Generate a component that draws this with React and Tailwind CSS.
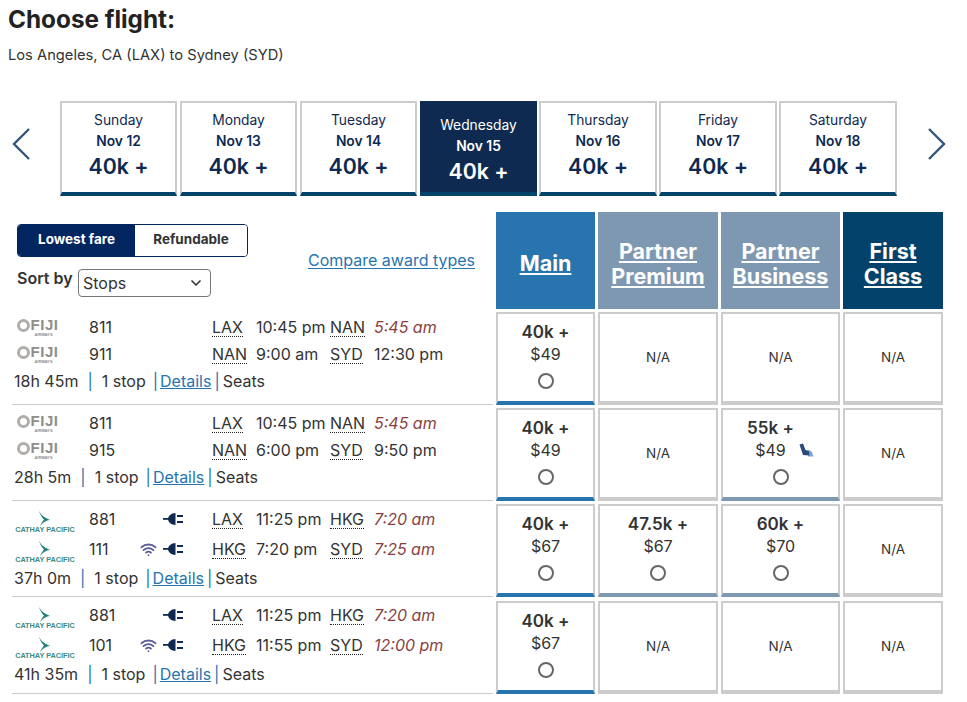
import { ChevronDown, Wifi } from 'lucide-react';

const days = [
  ['Sunday', 'Nov 12', 'w-[117px]'],
  ['Monday', 'Nov 13', 'w-[117px]'],
  ['Tuesday', 'Nov 14', 'w-[117px]'],
  ['Wednesday', 'Nov 15', 'w-[117px] -mr-[1px]', true],
  ['Thursday', 'Nov 16', 'w-[118px] -mr-[1px]'],
  ['Friday', 'Nov 17', 'w-[118px] -mr-[1px]'],
  ['Saturday', 'Nov 18', 'w-[118px]'],
];

const rows = [
  {
    logo: 'fiji',
    legs: [
      ['811', false, false, 'LAX', '10:45 pm', 'NAN', '5:45 am', true],
      ['911', false, false, 'NAN', '9:00 am', 'SYD', '12:30 pm', false],
    ],
    total: '18h 45m',
    height: 'h-[96px]',
    rowClass: 'pt-[5px]',
    cells: [['40k +', '$49', 'main'], null, null, null],
  },
  {
    logo: 'fiji',
    legs: [
      ['811', false, false, 'LAX', '10:45 pm', 'NAN', '5:45 am', true],
      ['915', false, false, 'NAN', '6:00 pm', 'SYD', '9:50 pm', false],
    ],
    total: '28h 5m',
    height: 'h-[96px]',
    rowClass: 'pt-[5px]',
    cells: [['40k +', '$49', 'main'], null, ['55k +', '$49', 'partner', true], null],
  },
  {
    logo: 'cathay',
    legs: [
      ['881', false, true, 'LAX', '11:25 pm', 'HKG', '7:20 am', true],
      ['111', true, true, 'HKG', '7:20 pm', 'SYD', '7:25 am', true],
    ],
    total: '37h 0m',
    height: 'h-[97px]',
    rowClass: 'pt-[3px]',
    cells: [['40k +', '$67', 'main'], ['47.5k +', '$67', 'partner'], ['60k +', '$70', 'partner'], null],
  },
  {
    logo: 'cathay',
    legs: [
      ['881', false, true, 'LAX', '11:25 pm', 'HKG', '7:20 am', true],
      ['101', true, true, 'HKG', '11:55 pm', 'SYD', '12:00 pm', true],
    ],
    total: '41h 35m',
    height: 'h-[96px]',
    rowClass: 'pt-[2px]',
    cells: [['40k +', '$67', 'main'], null, null, null],
  },
];

function FijiLogo() {
  return (
    <div className="ml-[5px] flex w-[41px] flex-col items-center font-['Liberation_Sans',sans-serif] text-[#85827f] opacity-90">
      <div className="flex items-center gap-[1px]">
        <span className="h-[13px] w-[13px] rounded-full border-[3px] border-[#a8a5a3]" />
        <span className="text-[15px] leading-[14px] font-bold tracking-[0.5px]">FIJI</span>
      </div>
      <span className="ml-3 text-[4px] leading-[5px] font-bold">AIRWAYS</span>
    </div>
  );
}

function CathayLogo() {
  return (
    <div className="ml-[3px] flex h-[24px] w-[60px] flex-col items-center pt-[3px]">
      <svg width="15" height="16" viewBox="0 0 15 16" className="mr-[2px] shrink-0">
        <path d="M2 0 C3 4 6 7 13 10 C9 10.500 6 12 3 16 C4 13 6 11 7 9.500 C4.500 7 2.500 4 2 0Z" fill="#1f7f77" />
      </svg>
      <span className="shrink-0 font-['Liberation_Sans',sans-serif] text-[7.300px] leading-[8px] font-bold whitespace-nowrap text-[#3c8a84]">
        CATHAY PACIFIC
      </span>
    </div>
  );
}

function PlugIcon() {
  return (
    <svg width="20" height="14" viewBox="0 0 20 14" fill="#0f2a50">
      <path d="M0 6h6V7.800H0z" />
      <path d="M12.500 1v12C8.500 13 5 10 5 7s3.500-6 7.500-6z" />
      <path d="M14 3h6v2h-6zM14 9h6v2h-6z" />
    </svg>
  );
}

function SeatIcon() {
  return (
    <svg width="15" height="14" viewBox="0 0 15 14">
      <path d="M9.500 6.500 L13 9 L14.500 13.500 L9 13.500z" fill="#7fa8d8" />
      <path d="M0.500 1.500 L4 0.500 L6.500 7 L10 8 L10.500 12.500 L4 12z" fill="#2b4a78" />
    </svg>
  );
}

function Code({ children }) {
  return <span className="inline-block border-b border-dotted border-[#222] leading-[17px]">{children}</span>;
}

function Leg({ leg, logo }) {
  const [num, wifi, plug, from, dep, to, arr, red] = leg;
  const height = logo === 'fiji' ? 'h-[21px]' : 'h-[24px]';
  return (
    <div className={`grid grid-cols-[77px_51px_21px_2px_49px_44px_74px_44px_1fr] items-center whitespace-nowrap ${height}`}>
      <div className="flex items-center">{logo === 'fiji' ? <FijiLogo /> : <CathayLogo />}</div>
      <span>{num}</span>
      <span className="flex items-center">{wifi && <Wifi size={17} strokeWidth={2.6} color="#5a5f96" />}</span>
      <span />
      <span className="flex items-center">{plug && <PlugIcon />}</span>
      <span><Code>{from}</Code></span>
      <span>{dep}</span>
      <span><Code>{to}</Code></span>
      <span className={red ? 'text-[#8a3f3f] italic' : ''}>{arr}</span>
    </div>
  );
}

function FareCell({ cell }) {
  if (!cell) {
    return (
      <div className="flex h-[93px] items-center justify-center border-2 border-b-[4px] border-[#cccccc] bg-white text-[13.500px] text-[#333]">
        N/A
      </div>
    );
  }
  const [points, price, kind, seat] = cell;
  const bar = kind === 'main' ? 'border-b-[#2774ae]' : 'border-b-[#7f98b2]';
  return (
    <div className={`flex h-[93px] flex-col items-center border-2 border-b-[4px] border-[#cccccc] bg-white pt-[6px] ${bar}`}>
      <span className={`text-[17px] leading-[24px] font-semibold text-[#333] ${seat ? 'mr-[20px]' : ''}`}>{points}</span>
      <span className="relative text-[16px] leading-[20px] text-[#333]">
        <span className={seat ? 'mr-[20px]' : ''}>{price}</span>
        {seat && (
          <span className="absolute top-[3px] -right-[8px]">
            <SeatIcon />
          </span>
        )}
      </span>
      <span className="mt-[9px] h-[16px] w-[16px] rounded-full border-2 border-[#666]" />
    </div>
  );
}

function HeaderCell({ bg, lines }) {
  return (
    <div className={`flex h-[97px] flex-col items-center justify-center pt-[6px] text-[21.500px] leading-[25px] font-bold text-white ${bg}`}>
      {lines.map((l) => (
        <span key={l} className="underline underline-offset-2">{l}</span>
      ))}
    </div>
  );
}

function Arrow({ right }) {
  return (
    <svg width="20" height="34" viewBox="0 0 20 34" fill="none" stroke="#33567a" strokeWidth="2.4">
      <path d={right ? 'M2 2l15 15L2 32' : 'M18 2L3 17l15 15'} />
    </svg>
  );
}

export default function App() {
  return (
    <div className="h-[702px] w-[967px] overflow-hidden bg-white font-[Inter,sans-serif] text-[#333]">
      <div className="px-2 pt-[4px]">
        <h1 className="text-[24.300px] leading-[30px] font-bold text-[#222]">Choose flight:</h1>
        <p className="mt-[11px] text-[14.700px] leading-[20px] text-[#333]">Los Angeles, CA (LAX) to Sydney (SYD)</p>
      </div>

      <div className="mt-[36px] flex h-[95px] items-center">
        <div className="mb-[10px] flex w-[60px] justify-center pr-[26px] pl-[8px]"><Arrow /></div>
        <div className="flex gap-[3px]">
          {days.map(([day, date, size, active]) => (
            <div
              key={day}
              className={
                active
                  ? `flex h-[95px] flex-col items-center border-b-[4px] border-[#03426a] bg-[#0f2a50] pt-[14px] text-white ${size}`
                  : `flex h-[95px] flex-col items-center border-2 border-b-[4px] border-[#cccccc] border-b-[#03426a] bg-white pt-[7px] text-[#0f2a50] ${size}`
              }
            >
              <span className="text-[13.800px] leading-[20px]">{day}</span>
              <span className="text-[13.800px] leading-[22px] font-semibold">{date}</span>
              <span className="text-[21.300px] leading-[28px] font-semibold">40k +</span>
            </div>
          ))}
        </div>
        <div className="mb-[10px] ml-[30px]"><Arrow right /></div>
      </div>

      <div className="mt-[16px] grid grid-cols-[481px_99px_120px_119px_100px] gap-x-[3px] pl-[12px]">
        <div className="flex h-[100px] flex-col pl-[5px]">
          <div className="mt-[12px] flex h-[33px] w-[231px] overflow-hidden rounded border border-[#01265f] text-[13.500px] font-bold">
            <span className="flex w-[117px] items-center justify-center bg-[#01265f] pb-[2px] text-white">Lowest fare</span>
            <span className="flex flex-1 items-center justify-center bg-white pb-[2px]">Refundable</span>
          </div>
          <div className="mt-[12px] flex items-start">
            <span className="-mt-[1px] w-[61px] text-[16px] leading-[20px] font-semibold whitespace-nowrap">Sort by</span>
            <div className="flex h-[28px] w-[133px] items-center justify-between rounded-sm border border-[#767676] pr-[6px] pb-[1px] pl-[4px] text-[16px]">
              Stops
              <ChevronDown size={16} strokeWidth={2.5} />
            </div>
            <a className="-mt-[21px] ml-[97px] text-[16px] whitespace-nowrap text-[#2774ae] underline underline-offset-2">Compare award types</a>
          </div>
        </div>
        <HeaderCell bg="bg-[#2774ae]" lines={['Main']} />
        <HeaderCell bg="bg-[#7f98b2]" lines={['Partner', 'Premium']} />
        <HeaderCell bg="bg-[#7f98b2]" lines={['Partner', 'Business']} />
        <HeaderCell bg="bg-[#03426a]" lines={['First', 'Class']} />

        {rows.map((r) => (
          <div key={r.total + r.legs[1][0]} className="contents">
            <div className={r.height}>
              <div className={`flex h-[93px] flex-col gap-[6px] border-b border-[#ccc] text-[16px] leading-[21px] ${r.rowClass}`}>
                {r.legs.map((leg, i) => (
                  <Leg key={i} leg={leg} logo={r.logo} />
                ))}
                <div className={`whitespace-nowrap pl-[2px] ${r.logo === 'cathay' ? 'mt-[1px]' : ''}`}>
                  {r.total}
                  <span className="mx-[9px] text-[#2774ae]">|</span>1 stop
                  <span className="mr-[2px] ml-[7px] text-[#2774ae]">|</span>
                  <a className="text-[#2774ae] underline">Details</a>
                  <span className="mx-[3px] text-[#2774ae]">|</span>Seats
                </div>
              </div>
            </div>
            {r.cells.map((c, i) => (
              <div key={i}><FareCell cell={c} /></div>
            ))}
          </div>
        ))}
      </div>
    </div>
  );
}
